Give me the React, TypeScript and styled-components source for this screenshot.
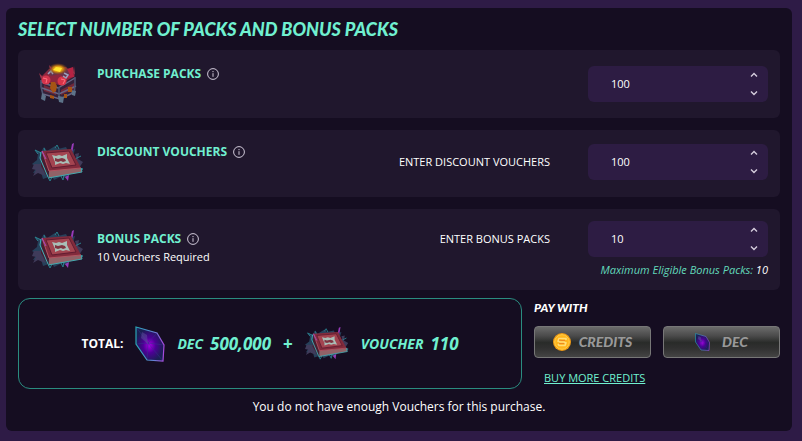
import React, { useState } from "react";
import styled, { createGlobalStyle } from "styled-components";

const mint = "#70f0d0";

const GlobalStyle = createGlobalStyle`
  * { box-sizing: border-box; }
  body {
    margin: 0;
    background: #2e1b46;
    color: #fff;
    font-family: "Open Sans", "Noto Sans", sans-serif;
    font-size: 12px;
    line-height: 16px;
  }
  #root { display: flow-root; }
`;

const Panel = styled.main`
  margin: 8px 10px 10px 6px;
  padding: 9px 12px 16px;
  background: #150d21;
  border-radius: 6px;
`;

const Title = styled.h1`
  margin: 0 0 9px;
  font: italic 900 18px/24px Lato, sans-serif;
  color: ${mint};
`;

const Rows = styled.div`
  display: flex;
  flex-direction: column;
  gap: 12px;
`;

const Row = styled.section<{ $top: number; $bottom: number }>`
  display: grid;
  grid-template-columns: 67px 1fr auto 180px;
  align-items: start;
  padding: ${(p) => p.$top}px 12px ${(p) => p.$bottom}px;
  background: #20172d;
  border-radius: 6px;
`;

const Art = styled.div`
  display: flex;
  align-items: center;
  justify-content: center;
  align-self: center;
  height: 36px;
  padding-right: 12px;
`;

const Info = styled.div<{ $drop?: boolean }>`
  padding-top: ${(p) => (p.$drop ? 10 : 0)}px;
`;

const NameLine = styled.div`
  display: flex;
  align-items: center;
  gap: 6px;
`;

const Name = styled.h2`
  margin: 0;
  font-size: 12px;
  line-height: 16px;
  font-weight: 700;
  color: ${mint};
`;

const InfoButton = styled.button`
  display: flex;
  padding: 0;
  border: 0;
  background: none;
  color: #cfc8d8;
  cursor: pointer;
`;

const Note = styled.p`
  margin: 2px 0 0;
  font-size: 11px;
`;

const FieldLabel = styled.label`
  padding-right: 38px;
  font-size: 11px;
  line-height: 36px;
`;

const Field = styled.div`
  display: flex;
  height: 36px;
  padding-right: 8px;
  background: #2d1c43;
  border-radius: 6px;
`;

const NumberInput = styled.input`
  flex: 1;
  min-width: 0;
  padding: 0 0 0 23px;
  border: 0;
  outline: 0;
  background: none;
  color: #fff;
  font: 11px/16px "Open Sans", sans-serif;
  appearance: textfield;
  &::-webkit-inner-spin-button { appearance: none; margin: 0; }
`;

const Steps = styled.div`
  display: flex;
  flex-direction: column;
`;

const Step = styled.button`
  display: flex;
  flex: 1;
  align-items: center;
  padding: 0 2px;
  border: 0;
  background: none;
  color: #d5cddd;
  cursor: pointer;
`;

const Limit = styled.p`
  margin: 5px 0 0;
  font-size: 11px;
  font-style: italic;
  text-align: right;
  white-space: nowrap;
`;

const Accent = styled.span`
  color: #62d9bb;
`;

const Checkout = styled.div`
  display: grid;
  grid-template-columns: 1fr 246px;
  gap: 12px;
  margin-top: 8px;
`;

const Total = styled.section`
  display: flex;
  align-items: center;
  justify-content: center;
  gap: 12px;
  height: 91px;
  border: 1px solid #2a8c80;
  border-radius: 12px;
`;

const Cost = styled.span`
  display: flex;
  align-items: center;
  gap: 7px;
  color: ${mint};
  font-style: italic;
  font-weight: 700;
  font-size: 14px;
`;

const Amount = styled.span`
  font-size: 17px;
`;

const Plus = styled.span`
  color: ${mint};
  font-size: 17px;
  font-weight: 700;
`;

const PayTitle = styled.h2`
  margin: 2px 0 10px;
  font: italic 900 12px/16px Lato, sans-serif;
`;

const PayButtons = styled.div`
  display: grid;
  grid-template-columns: 1fr 1fr;
  gap: 12px;
`;

const PayButton = styled.button<{ $gap: number }>`
  display: flex;
  align-items: center;
  justify-content: center;
  gap: ${(p) => p.$gap}px;
  height: 32px;
  padding: 0;
  border: 1px solid #777;
  border-radius: 4px;
  background: linear-gradient(#6b6b6b 0%, #4a4a4a 30%, #292b29 52%, #303030 70%, #444 100%);
  color: #999;
  font: italic 900 14px/20px Lato, sans-serif;
`;

const BuyLink = styled.a`
  display: inline-block;
  margin: 12px 0 0 10px;
  color: ${mint};
  font-size: 11px;
`;

const Message = styled.p`
  margin: 10px 0 0;
  text-align: center;
`;

const InfoIcon = () => (
  <svg width="12" height="12" viewBox="0 0 12 12" fill="none" stroke="currentColor">
    <circle cx="6" cy="6" r="5.4" />
    <path d="M6 5.2v3.6M6 3v1.2" />
  </svg>
);

const Chevron = ({ up }: { up?: boolean }) => (
  <svg width="8" height="6" viewBox="0 0 8 6" fill="none" stroke="currentColor" strokeWidth="1.4">
    <path d={up ? "M1 4.5 4 1.5 7 4.5" : "M1 1.5 4 4.5 7 1.5"} />
  </svg>
);

const Chest = () => (
  <svg width="42" height="42" viewBox="0 0 42 42">
    <defs>
      <radialGradient id="glow">
        <stop offset="0" stopColor="#ffe93a" />
        <stop offset=".5" stopColor="#d38b13" />
        <stop offset="1" stopColor="#7a3a18" stopOpacity="0" />
      </radialGradient>
    </defs>
    <path d="M4 16 20 23 38 13 39 29 23 37 5 30Z" fill="#34223a" />
    <path d="M4 14 12 6 29 4 38 13 22 22 5 18Z" fill="#8d263d" />
    <path d="M27 7 36 4 37 14 29 15Z" fill="#b52343" />
    <path d="M7 22 19 27v5L7 28ZM24 27 37 20v6L24 32Z" fill="#71283a" />
    <path d="M4 19 21 25 38 15M5 25 22 31 39 23M6 31 23 36 38 29" fill="none" stroke="#686684" strokeWidth="1.4" />
    <path d="M4 17 4 24 6 32M22 24v11M38 14 38 22 37 31" fill="none" stroke="#4d5673" strokeWidth="1.5" />
    <path d="m5 30-1 6 4 2 1-5ZM21 33l1 6 4 1 1-6ZM34 27l1 5 3 1 1-5Z" fill="#5d7389" />
    <circle cx="9" cy="17" r="4.5" fill="#d3344c" />
    <circle cx="25" cy="18" r="4.5" fill="#d83449" />
    <path d="m6 15 4 1-1 4M24 16l4 1-2 4" stroke="#ff7180" fill="none" />
    <path d="M14 19h4l2 4-1 5-3 2-3-5ZM31 24h4v5h-4ZM13 32l4 1v3l-4-1ZM27 31h3v4h-3Z" fill="#a65414" />
    <path d="M13 6 20 3 30 6 33 12 26 14 23 11 14 13 10 9Z" fill="#68334c" />
    <path d="m11 11 3-3 2 3M27 10l4 2-2 3-3-2" stroke="#98a0bd" strokeWidth="1.5" fill="none" />
    <ellipse cx="21" cy="6" rx="10" ry="6" fill="url(#glow)" />
    <path d="m16 7 3-3 6 1-2 4Z" fill="#ffe52c" />
    <path d="m4 16-2-6 4 4M13 6l-1-4 3 3M36 10l1-7 1 9" fill="#9e354b" />
  </svg>
);

const Book = ({ width = 52 }: { width?: number }) => (
  <svg width={width} height={Math.round(width * 0.79)} viewBox="0 0 52 41">
    <path d="m6 12-3-4 6 2 3-5 3 4 8-5 3 3 8-2 2 4 7-2-2 7 7 6-5 2 2 8-8 2-2 5-5-3-8 4-2-4-9 3-2-7-8 1 4-6-5-3 5-4Z" fill="#26405a" />
    <path d="M2 22h8l3 12-7-3-5 3 3-6-4-1ZM43 12l4-1-1 6 5 3-4 6Z" fill="#3f3b5a" />
    <path d="m6 12-3-4 6 3M12 6l2 5M23 6l2-3 2 4M43 17l6-3M47 26l4 1-5 2M20 35l-2 4-2-4M29 34l2 4 1-5" fill="none" stroke="#2a818f" />
    <path d="m39 7 1-5 2-1-1 6-1 3ZM33 35l3 4 1-6Z" fill="#983bb9" />
    <path d="M10 9 39 7 49 26 17 29Z" fill="#822b3c" />
    <path d="M10 9 17 29 16 36 9 24Z" fill="#481d31" />
    <path d="m17 29 32-3 1 4-33 6Z" fill="#916267" />
    <path d="M16 36l34-6-1-4" fill="none" stroke="#43a9ae" />
    <path d="m10 9 7 20 32-3" fill="none" stroke="#b65360" />
    <path d="m9 10-1 6 8 19" fill="none" stroke="#40b6bb" />
    <path d="m10 9 4 8" stroke="#ad48c1" />
    <path d="m14 11 23-2 7 14-24 3Z" fill="#a34450" stroke="#611c31" />
    <path d="m20 13 4 1 3-1 3 1 5-2v4l3 6-4-1-3 1-3-1-5 2v-3Z" fill="#a9beb7" />
    <path d="m23 16 3 1 4-1 3 1 1 2-3 1-2-1-3 1-3-1Z" fill="#803340" />
  </svg>
);

const Crystal = ({ width, height }: { width: number; height: number }) => (
  <svg width={width} height={height} viewBox="0 0 30 36">
    <defs>
      <radialGradient id="gem" cx=".48" cy=".54" r=".5">
        <stop offset="0" stopColor="#a900e5" />
        <stop offset=".45" stopColor="#4d0096" />
        <stop offset="1" stopColor="#192053" />
      </radialGradient>
      <linearGradient id="gemEdge">
        <stop offset="0" stopColor="#28a4b4" />
        <stop offset=".6" stopColor="#5f83d1" />
        <stop offset="1" stopColor="#a847de" />
      </linearGradient>
    </defs>
    <path d="M1 1 22 7 29 19 28 35 12 34 1 18Z" fill="url(#gem)" />
    <path d="m1 1 12 16L22 7M13 17 1 18M13 17 29 19M13 17 28 35M13 17 12 34" stroke="#35348a" strokeWidth=".8" opacity=".6" fill="none" />
    <path d="m7 6 5 3 1 9-7-6Z" fill="#6966a5" opacity=".4" />
    <path d="M1 1 22 7 29 19 28 35 12 34 1 18Z" fill="none" stroke="url(#gemEdge)" strokeWidth="1.2" />
  </svg>
);

const Coin = () => (
  <svg width="18" height="18" viewBox="0 0 18 18">
    <circle cx="9" cy="9" r="9" fill="#f19b15" />
    <circle cx="9" cy="9" r="7.3" fill="#ffb51d" stroke="#ffd047" />
    <path d="M13 7V5.500H6L5 8l2 1h4l2 1-1 2.500H6L5 11" fill="none" stroke="#ffdc76" strokeWidth="1.6" />
    <path d="m6 7 3 .5h3M6 10.500h5" stroke="#ee8a20" fill="none" />
  </svg>
);

type QuantityProps = { id: string; label?: string; initial: number };

function Quantity({ id, label, initial }: QuantityProps) {
  const [value, setValue] = useState(initial);
  return (
    <Field>
      <NumberInput
        id={id}
        type="number"
        min={0}
        aria-label={label}
        value={value}
        onChange={(e) => setValue(Number(e.target.value))}
      />
      <Steps>
        <Step type="button" aria-label="Increase" onClick={() => setValue(value + 1)}><Chevron up /></Step>
        <Step type="button" aria-label="Decrease" onClick={() => setValue(Math.max(0, value - 1))}><Chevron /></Step>
      </Steps>
    </Field>
  );
}

const Heading = ({ children }: { children: string }) => (
  <NameLine>
    <Name>{children}</Name>
    <InfoButton type="button" aria-label={`About ${children}`}><InfoIcon /></InfoButton>
  </NameLine>
);

export default function App() {
  return (
    <>
      <GlobalStyle />
      <Panel>
        <Title>SELECT NUMBER OF PACKS AND BONUS PACKS</Title>
        <Rows>
          <Row $top={16} $bottom={16}>
            <Art><Chest /></Art>
            <Info><Heading>PURCHASE PACKS</Heading></Info>
            <span />
            <Quantity id="packs" label="Purchase packs" initial={100} />
          </Row>
          <Row $top={14} $bottom={17}>
            <Art><Book /></Art>
            <Info><Heading>DISCOUNT VOUCHERS</Heading></Info>
            <FieldLabel htmlFor="vouchers">ENTER DISCOUNT VOUCHERS</FieldLabel>
            <Quantity id="vouchers" initial={100} />
          </Row>
          <Row $top={12} $bottom={12}>
            <Art><Book /></Art>
            <Info $drop>
              <Heading>BONUS PACKS</Heading>
              <Note>10 Vouchers Required</Note>
            </Info>
            <FieldLabel htmlFor="bonus">ENTER BONUS PACKS</FieldLabel>
            <div>
              <Quantity id="bonus" initial={10} />
              <Limit><Accent>Maximum Eligible Bonus Packs:</Accent> 10</Limit>
            </div>
          </Row>
        </Rows>
        <Checkout>
          <Total>
            <strong>TOTAL:</strong>
            <Crystal width={30} height={36} />
            <Cost>DEC <Amount>500,000</Amount></Cost>
            <Plus>+</Plus>
            <Book width={44} />
            <Cost>VOUCHER <Amount>110</Amount></Cost>
          </Total>
          <section>
            <PayTitle>PAY WITH</PayTitle>
            <PayButtons>
              <PayButton type="button" $gap={8}><Coin />CREDITS</PayButton>
              <PayButton type="button" $gap={12}><Crystal width={15} height={18} />DEC</PayButton>
            </PayButtons>
            <BuyLink href="#credits">BUY MORE CREDITS</BuyLink>
          </section>
        </Checkout>
        <Message>You do not have enough Vouchers for this purchase.</Message>
      </Panel>
    </>
  );
}
